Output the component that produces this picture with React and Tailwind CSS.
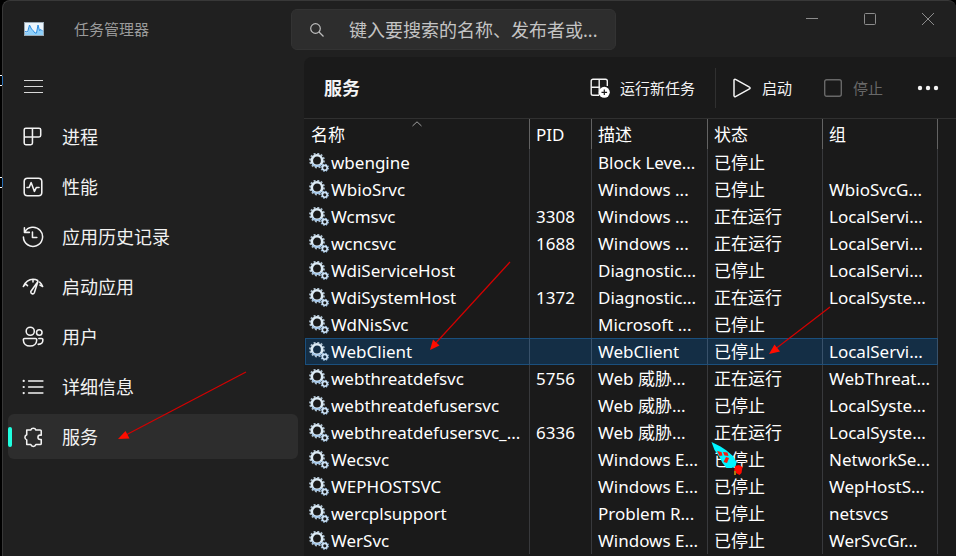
import React from "react";

const ICON = {
  viewBox: "0 0 20 20",
  fill: "none",
  stroke: "currentColor",
  strokeWidth: 1.4,
  strokeLinecap: "round",
  strokeLinejoin: "round",
  "aria-hidden": true,
};

function NavSvg({ children }) {
  return (
    <svg {...ICON} className="size-[22px] shrink-0">
      {children}
    </svg>
  );
}

const NAV = [
  {
    label: "进程",
    icon: (
      <NavSvg>
        <path d="M3.500 2h12a1.500 1.500 0 0 1 1.500 1.500V8.500a1.500 1.500 0 0 1-1.500 1.500H2M9.500 2v13.500A1.500 1.500 0 0 1 8 17H3.500A1.500 1.500 0 0 1 2 15.500v-12A1.500 1.500 0 0 1 3.500 2" />
      </NavSvg>
    ),
  },
  {
    label: "性能",
    icon: (
      <NavSvg>
        <rect x="2" y="2" width="16" height="16" rx="3" />
        <path d="M4.500 10.500h2L8.300 6l3 8 1.700-3.500h2.500" />
      </NavSvg>
    ),
  },
  {
    label: "应用历史记录",
    icon: (
      <NavSvg>
        <path d="M2.200 1.500v4.300h4.500M2.400 5.600A8.700 8.700 0 1 1 1.300 10M9.500 5.500v5h4" />
      </NavSvg>
    ),
  },
  {
    label: "启动应用",
    icon: (
      <NavSvg>
        <path d="M1.200 9.500l2-2.300M3.200 7.200l1.800 1.600M1.200 9.500C3.200 5.200 6.200 3 10 3c1.700 0 3.100.400 4.300 1.100M10 3v2.500M16 5.600c1.200 1 2.100 2.300 2.800 3.900M18.800 9.500l-2.500-1.200M14.500 5l-3.300 10.200a1.700 1.700 0 0 1-3.200-1.100Z" />
      </NavSvg>
    ),
  },
  {
    label: "用户",
    icon: (
      <NavSvg>
        <circle cx="7.500" cy="4.800" r="3.700" />
        <circle cx="15.700" cy="6" r="2.500" />
        <path d="M2.400 11.300h9.800a1.200 1.200 0 0 1 1.200 1.200c0 3.600-2.600 5.700-6.100 5.700S1.200 16.100 1.200 12.500a1.200 1.200 0 0 1 1.200-1.200ZM15.300 11.300h2.500a1.200 1.200 0 0 1 1.200 1.200c0 2.700-1.700 4.200-4.300 4.200" />
      </NavSvg>
    ),
  },
  {
    label: "详细信息",
    icon: (
      <NavSvg>
        <path d="M6 4.500h13M6 10h13M6 15.500h13" />
        <path strokeWidth="2" d="M1.500 4.500h.1M1.500 10h.1M1.500 15.500h.1" />
      </NavSvg>
    ),
  },
  {
    label: "服务",
    active: true,
    icon: (
      <NavSvg>
        <path d="M4.300 3.700H8a2.400 2.400 0 0 1 4.600 0h3.900a1 1 0 0 1 1 1v3.600h-1a2 2 0 0 0 0 4h1v3.600a1 1 0 0 1-1 1h-3.900a2.400 2.400 0 0 1-4.600 0H4.300V12.600a2.500 2.500 0 0 1 0-4.700Z" />
      </NavSvg>
    ),
  },
];

const SERVICES = [
  ["wbengine", "", "Block Leve...", "已停止", ""],
  ["WbioSrvc", "", "Windows ...", "已停止", "WbioSvcG..."],
  ["Wcmsvc", "3308", "Windows ...", "正在运行", "LocalServi..."],
  ["wcncsvc", "1688", "Windows ...", "正在运行", "LocalServi..."],
  ["WdiServiceHost", "", "Diagnostic...", "已停止", "LocalServi..."],
  ["WdiSystemHost", "1372", "Diagnostic...", "正在运行", "LocalSyste..."],
  ["WdNisSvc", "", "Microsoft ...", "已停止", ""],
  ["WebClient", "", "WebClient", "已停止", "LocalServi..."],
  ["webthreatdefsvc", "5756", "Web 威胁...", "正在运行", "WebThreat..."],
  ["webthreatdefusersvc", "", "Web 威胁...", "已停止", "LocalSyste..."],
  ["webthreatdefusersvc_...", "6336", "Web 威胁...", "正在运行", "LocalSyste..."],
  ["Wecsvc", "", "Windows E...", "已停止", "NetworkSe..."],
  ["WEPHOSTSVC", "", "Windows E...", "已停止", "WepHostS..."],
  ["wercplsupport", "", "Problem R...", "已停止", "netsvcs"],
  ["WerSvc", "", "Windows E...", "已停止", "WerSvcGr..."],
];

const COLUMNS = ["名称", "PID", "描述", "状态", "组"];

function GearIcon() {
  return (
    <svg viewBox="0 0 20 20" className="size-5 shrink-0" fill="none" aria-hidden="true">
      <circle cx="8" cy="7.500" r="7" stroke="#a9bccb" strokeWidth="1.800" strokeDasharray="2 1.665" />
      <circle cx="8" cy="7.500" r="5.200" stroke="#dcebf5" strokeWidth="2.600" />
      <path d="M3.200 10.500A5.600 5.600 0 0 0 12 11.500" stroke="#9cc3ea" strokeWidth="1.400" />
      <circle cx="15.800" cy="14.800" r="3.500" stroke="#8fb4d6" strokeWidth="1.400" strokeDasharray="1.500 1.250" />
      <circle cx="15.800" cy="14.800" r="2.400" stroke="#cfe4f7" strokeWidth="1.600" />
    </svg>
  );
}

function TitleBar() {
  return (
    <header className="flex h-14 shrink-0 items-start">
      <div className="flex h-14 w-[288px] shrink-0 items-center pl-[21px]">
        <svg viewBox="0 0 20 14" className="h-[14px] w-5" aria-hidden="true">
          <rect x="0.500" y="0.500" width="19" height="13" fill="#eaf4fb" stroke="#9aa9b5" />
          <path d="M1 10.500l2 .5 1-1.500L5.500 3l2 4 1.500 1.500L11 11l1.500 0 1.500-8 1.500 5.500 1.500-1 2 2.500v3H1Z" fill="#8fd0fa" />
          <path d="M1 9.500l2 .5 1-1.500L5.500 3l2 4 1.500 1.500L11 11h1.500L14 3l1.500 5.500 1.500-1 2 2" fill="none" stroke="#2a8be0" />
        </svg>
        <h1 className="ml-[30px] text-[15px] leading-5 text-[#9b9b9b]">任务管理器</h1>
      </div>
      <label className="mt-2 flex h-[41px] w-[325px] items-center rounded-md border border-[#333333] bg-[#2d2d2d] pl-[18px]">
        <svg viewBox="0 0 14 14" className="size-[14px] shrink-0" fill="none" stroke="#bdbdbd" strokeWidth="1.200" aria-hidden="true">
          <circle cx="5.500" cy="5.500" r="4.800" />
          <path d="M9 9l4.500 4.500" />
        </svg>
        <input
          type="text"
          aria-label="搜索"
          placeholder="键入要搜索的名称、发布者或..."
          className="ml-[25px] w-full min-w-0 bg-transparent text-[18px] leading-6 text-white outline-none placeholder:text-[#c4c4c4]"
        />
      </label>
      <div className="-mr-px ml-auto flex text-[#8c8c8c]">
        <button type="button" aria-label="最小化" className="flex h-9 w-[58px] items-center justify-center">
          <svg viewBox="0 0 12 12" className="size-3" stroke="currentColor" aria-hidden="true">
            <path d="M0 5.500h12" />
          </svg>
        </button>
        <button type="button" aria-label="最大化" className="flex h-9 w-[58px] items-center justify-center">
          <svg viewBox="0 0 12 12" className="size-3" fill="none" stroke="currentColor" aria-hidden="true">
            <rect x="0.500" y="0.500" width="11" height="11" rx="1" />
          </svg>
        </button>
        <button type="button" aria-label="关闭" className="flex h-9 w-[58px] items-center justify-center">
          <svg viewBox="0 0 12 12" className="size-3" stroke="currentColor" aria-hidden="true">
            <path d="M0 0l12 12M12 0L0 12" />
          </svg>
        </button>
      </div>
    </header>
  );
}

function Sidebar() {
  return (
    <nav className="w-[301px] shrink-0 pl-[5px] pr-[6px]">
      <button type="button" aria-label="菜单" className="flex h-[57px] items-center pl-4 pt-[3px] text-[#d8d8d8]">
        <svg viewBox="0 0 20 14" className="h-[14px] w-5" stroke="currentColor" aria-hidden="true">
          <path d="M0 .5h19M0 6.500h19M0 12.500h19" />
        </svg>
      </button>
      <ul>
        {NAV.map((item) => (
          <li key={item.label} className="h-[50px]">
            <a
              href="#"
              aria-current={item.active ? "page" : undefined}
              className={
                item.active
                  ? "flex h-[45px] items-center rounded-md bg-[#2d2d2d] text-[#f2f2f2]"
                  : "flex h-[45px] items-center rounded-md text-[#f2f2f2]"
              }
            >
              <span className={item.active ? "h-5 w-1 rounded-full bg-[#1fffe0]" : "h-5 w-1"} />
              <span className="ml-[10px]">{item.icon}</span>
              <span className="ml-[18px] text-[18px] leading-6">{item.label}</span>
            </a>
          </li>
        ))}
      </ul>
    </nav>
  );
}

function Toolbar() {
  return (
    <div className="flex h-[62px] shrink-0 items-center border-b border-[#303030] pl-5 pr-[17px] text-[15px] leading-5 text-[#f4f4f4]">
      <h2 className="text-[18px] font-semibold leading-6">服务</h2>
      <button type="button" className="ml-auto flex h-10 items-center gap-[10px]">
        <svg viewBox="0 0 20 20" className="size-5" fill="none" stroke="currentColor" strokeWidth="1.400" aria-hidden="true">
          <path d="M9 17.300H3A1.800 1.800 0 0 1 1.200 15.500V3A1.800 1.800 0 0 1 3 1.200h12.500A1.800 1.800 0 0 1 17.300 3v5M9.200 1.200v16M1.200 9.200h9" />
          <circle cx="14.300" cy="14.300" r="5.500" fill="#ffffff" stroke="none" />
          <path d="M14.300 11.500v5.600M11.500 14.300h5.600" stroke="#1a1a1a" strokeWidth="1.200" />
        </svg>
        <span>运行新任务</span>
      </button>
      <span className="ml-5 h-10 w-px bg-[#303030]" />
      <button type="button" className="ml-4 flex h-10 items-center gap-[10px]">
        <svg viewBox="0 0 20 20" className="size-5" fill="none" stroke="currentColor" strokeWidth="1.500" strokeLinejoin="round" aria-hidden="true">
          <path d="M2 2.200a1 1 0 0 1 1.500-.8l14 7.700a1 1 0 0 1 0 1.800l-14 7.700A1 1 0 0 1 2 17.800Z" />
        </svg>
        <span>启动</span>
      </button>
      <button type="button" disabled className="ml-[31px] flex h-10 items-center gap-[10px] text-[#686868]">
        <svg viewBox="0 0 20 20" className="size-5" fill="none" stroke="currentColor" strokeWidth="1.400" aria-hidden="true">
          <rect x="1.700" y="1.700" width="16.600" height="16.600" rx="2" />
        </svg>
        <span>停止</span>
      </button>
      <button type="button" aria-label="更多" className="ml-[34px] flex h-10 items-center">
        <svg viewBox="0 0 22 6" className="h-[6px] w-[22px]" fill="currentColor" aria-hidden="true">
          <circle cx="3" cy="3" r="2.200" />
          <circle cx="11" cy="3" r="2.200" />
          <circle cx="19" cy="3" r="2.200" />
        </svg>
      </button>
    </div>
  );
}

function ServiceTable() {
  return (
    <div className="pl-px pr-[18px]">
      <table className="w-full table-fixed border-separate border-spacing-0 whitespace-nowrap text-left text-[17px] leading-[25px] text-white">
        <colgroup>
          <col />
          <col className="w-[62px]" />
          <col className="w-[116px]" />
          <col className="w-[115px]" />
          <col className="w-[115px]" />
        </colgroup>
        <thead>
          <tr className="h-[30px]">
            {COLUMNS.map((name, i) => (
              <th key={name} className="relative border-r border-[#636363] p-0 pl-[6px] font-normal">
                {name}
                {i === 0 && (
                  <svg viewBox="0 0 10 6" className="absolute left-1/2 top-[2px] h-[6px] w-[10px] -translate-x-1/2" fill="none" stroke="#a0a0a0" aria-hidden="true">
                    <path d="M.5 5L5 .8 9.500 5" />
                  </svg>
                )}
              </th>
            ))}
          </tr>
        </thead>
        <tbody>
          {SERVICES.map((row) => {
            const selected = row[0] === "WebClient";
            return (
              <tr key={row[0]} aria-selected={selected} className={selected ? "h-[27px] bg-[#142e45]" : "h-[27px]"}>
                {row.map((text, i) => (
                  <td
                    key={COLUMNS[i]}
                    className={
                      selected
                        ? "border-y border-r border-y-[#1a4f7d] border-r-[#38516a] p-0 pl-[6px] first:border-l first:border-l-[#1a4f7d] first:pl-[3px]"
                        : "border-r border-[#38393c] p-0 pl-[6px] first:pl-1"
                    }
                  >
                    {i === 0 ? (
                      <span className="flex items-center gap-[2px]">
                        <GearIcon />
                        {text}
                      </span>
                    ) : (
                      text
                    )}
                  </td>
                ))}
              </tr>
            );
          })}
        </tbody>
      </table>
    </div>
  );
}

function Annotations() {
  return (
    <svg viewBox="0 0 956 556" className="pointer-events-none absolute left-0 top-0 h-[556px] w-[956px]" aria-hidden="true">
      <g fill="none">
        <path d="M0 75.500h2M0 85.500h2M0 177.500h2M0 187.500h2" stroke="#ffffff" />
        <path d="M2.500 76v9M2.500 178v9" stroke="#2a6fb5" />
      </g>
      <g stroke="#d40000" strokeWidth="1.200" fill="none">
        <path d="M246 372L124 436" />
        <path d="M510 262L434 345" />
        <path d="M830 307L774 350" />
      </g>
      <g fill="#ff0d00">
        <path d="M118 439l7.500-8 4 7.500Z" />
        <path d="M430 350l3-10.500 6.500 6Z" />
        <path d="M769 354l5.500-9.500 5.500 7Z" />
      </g>
      <path d="M711.500 442l9 4.500 6 4 7 6 3 6-1 4-4 1.500-5 0-4-5-3-6-5-7Z" fill="#00f4ff" />
      <path d="M717 451l4.500 1 1 3.500-3 .5ZM723 452l4.500.5 1 3.500-4-.5ZM726 457l3 1-2 5-3.500-1Z" fill="#f01c10" />
      <path d="M735 466l4-1 3.500 2-1 6-2 2-5.500-3Z" fill="#ff0a00" />
      <path d="M734 471h2v4h-2Z" fill="#a87a10" />
    </svg>
  );
}

export default function App() {
  return (
    <div className="relative h-screen overflow-hidden bg-black pl-[2px] font-['Noto_Sans','Noto_Sans_CJK_SC',sans-serif]">
      <div className="flex h-full flex-col overflow-hidden rounded-t-lg border-l border-t border-[#383838] bg-[#202020]">
        <TitleBar />
        <div className="flex min-h-0 flex-1">
          <Sidebar />
          <main className="flex min-w-0 flex-1 flex-col overflow-hidden rounded-tl-lg bg-[#1a1a1a]">
            <Toolbar />
            <ServiceTable />
          </main>
        </div>
      </div>
      <Annotations />
    </div>
  );
}
